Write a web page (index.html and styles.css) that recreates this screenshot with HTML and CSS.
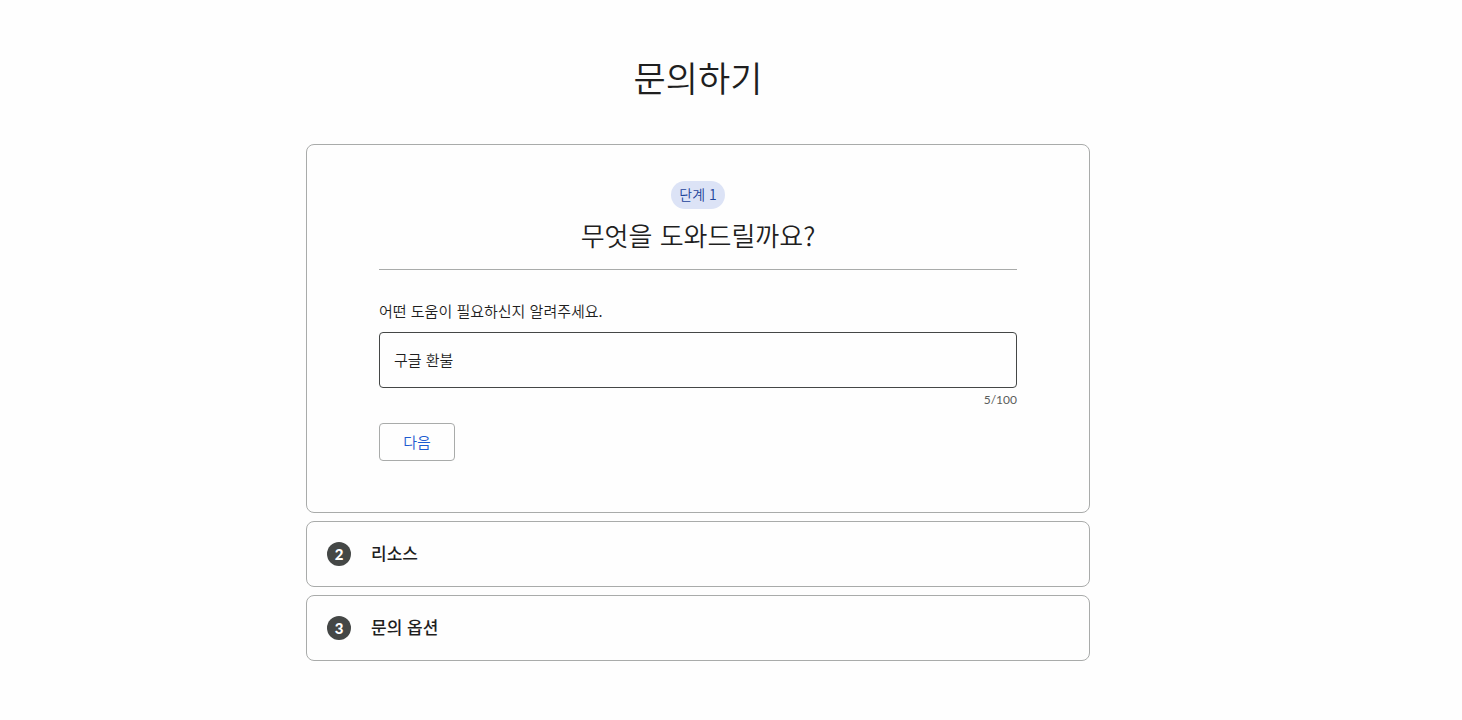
FILE: index.html
```html
<!DOCTYPE html>
<html lang="ko">
<head>
    <meta charset="UTF-8">
    <meta name="viewport" content="width=device-width, initial-scale=1.0">
    <title>문의하기</title>
    <link rel="stylesheet" href="styles.css">
</head>
<body>
    <main class="contact">
        <h1>문의하기</h1>
        <form class="card step-open">
            <div class="step-header">
                <span class="badge">단계 1</span>
                <h2>무엇을 도와드릴까요?</h2>
            </div>
            <label for="issue">어떤 도움이 필요하신지 알려주세요.</label>
            <input type="text" id="issue" maxlength="100" value="구글 환불">
            <div class="counter">5/100</div>
            <button type="button" class="next">다음</button>
        </form>
        <section class="card step">
            <span class="number">2</span>
            <h3>리소스</h3>
        </section>
        <section class="card step">
            <span class="number">3</span>
            <h3>문의 옵션</h3>
        </section>
    </main>
</body>
</html>
```

FILE: styles.css
```css
* {
    box-sizing: border-box;
}

body {
    margin: 0;
    padding: 56px 66px 56px 0;
    background: #fefefe;
    color: #1f1f1f;
    font-family: "Noto Sans CJK KR", sans-serif;
    font-size: 15px;
    font-weight: 350;
    line-height: 20px;
}

.contact {
    max-width: 784px;
    margin: 0 auto;
    display: flex;
    flex-direction: column;
    gap: 8px;
}

h1, h2, h3 {
    margin: 0;
}

h1 {
    margin-bottom: 38px;
    font-size: 35px;
    font-weight: 350;
    line-height: 42px;
    text-align: center;
}

.card {
    border: 1px solid #a9abaa;
    border-radius: 8px;
}

.step-open {
    padding: 36px 72px 51px;
    display: flex;
    flex-direction: column;
}

.step-header {
    display: flex;
    flex-direction: column;
    align-items: center;
    gap: 8px;
    padding-bottom: 16px;
    margin-bottom: 31px;
    border-bottom: 1px solid #a9abaa;
}

.badge {
    padding: 3px 8px 5px;
    border-radius: 14px;
    background: #dce3f6;
    color: #1c449b;
    font-size: 14px;
}

h2 {
    font-size: 26px;
    font-weight: 350;
    line-height: 36px;
}

label {
    margin-bottom: 11px;
}

input {
    width: 100%;
    height: 56px;
    padding: 0 14px 2px;
    border: 1px solid #444746;
    border-radius: 4px;
    background: transparent;
    color: #1f1f1f;
    font: inherit;
}

.counter {
    margin-bottom: 15px;
    padding-top: 4px;
    color: #5a5d5c;
    font-family: Lato, sans-serif;
    font-size: 12px;
    font-weight: 400;
    line-height: 16px;
    text-align: right;
}

.next {
    align-self: flex-start;
    width: 76px;
    height: 38px;
    padding: 0;
    border: 1px solid #a9abaa;
    border-radius: 4px;
    background: transparent;
    color: #1d5bd0;
    font: inherit;
    cursor: pointer;
}

.step {
    display: flex;
    align-items: center;
    gap: 20px;
    padding: 20px;
}

.number {
    width: 24px;
    height: 24px;
    border-radius: 50%;
    background: #444746;
    color: #fff;
    font-family: Lato, sans-serif;
    font-weight: 900;
    line-height: 24px;
    text-align: center;
}

h3 {
    padding-bottom: 2px;
    font-size: 17px;
    font-weight: 500;
    line-height: 22px;
}
```
